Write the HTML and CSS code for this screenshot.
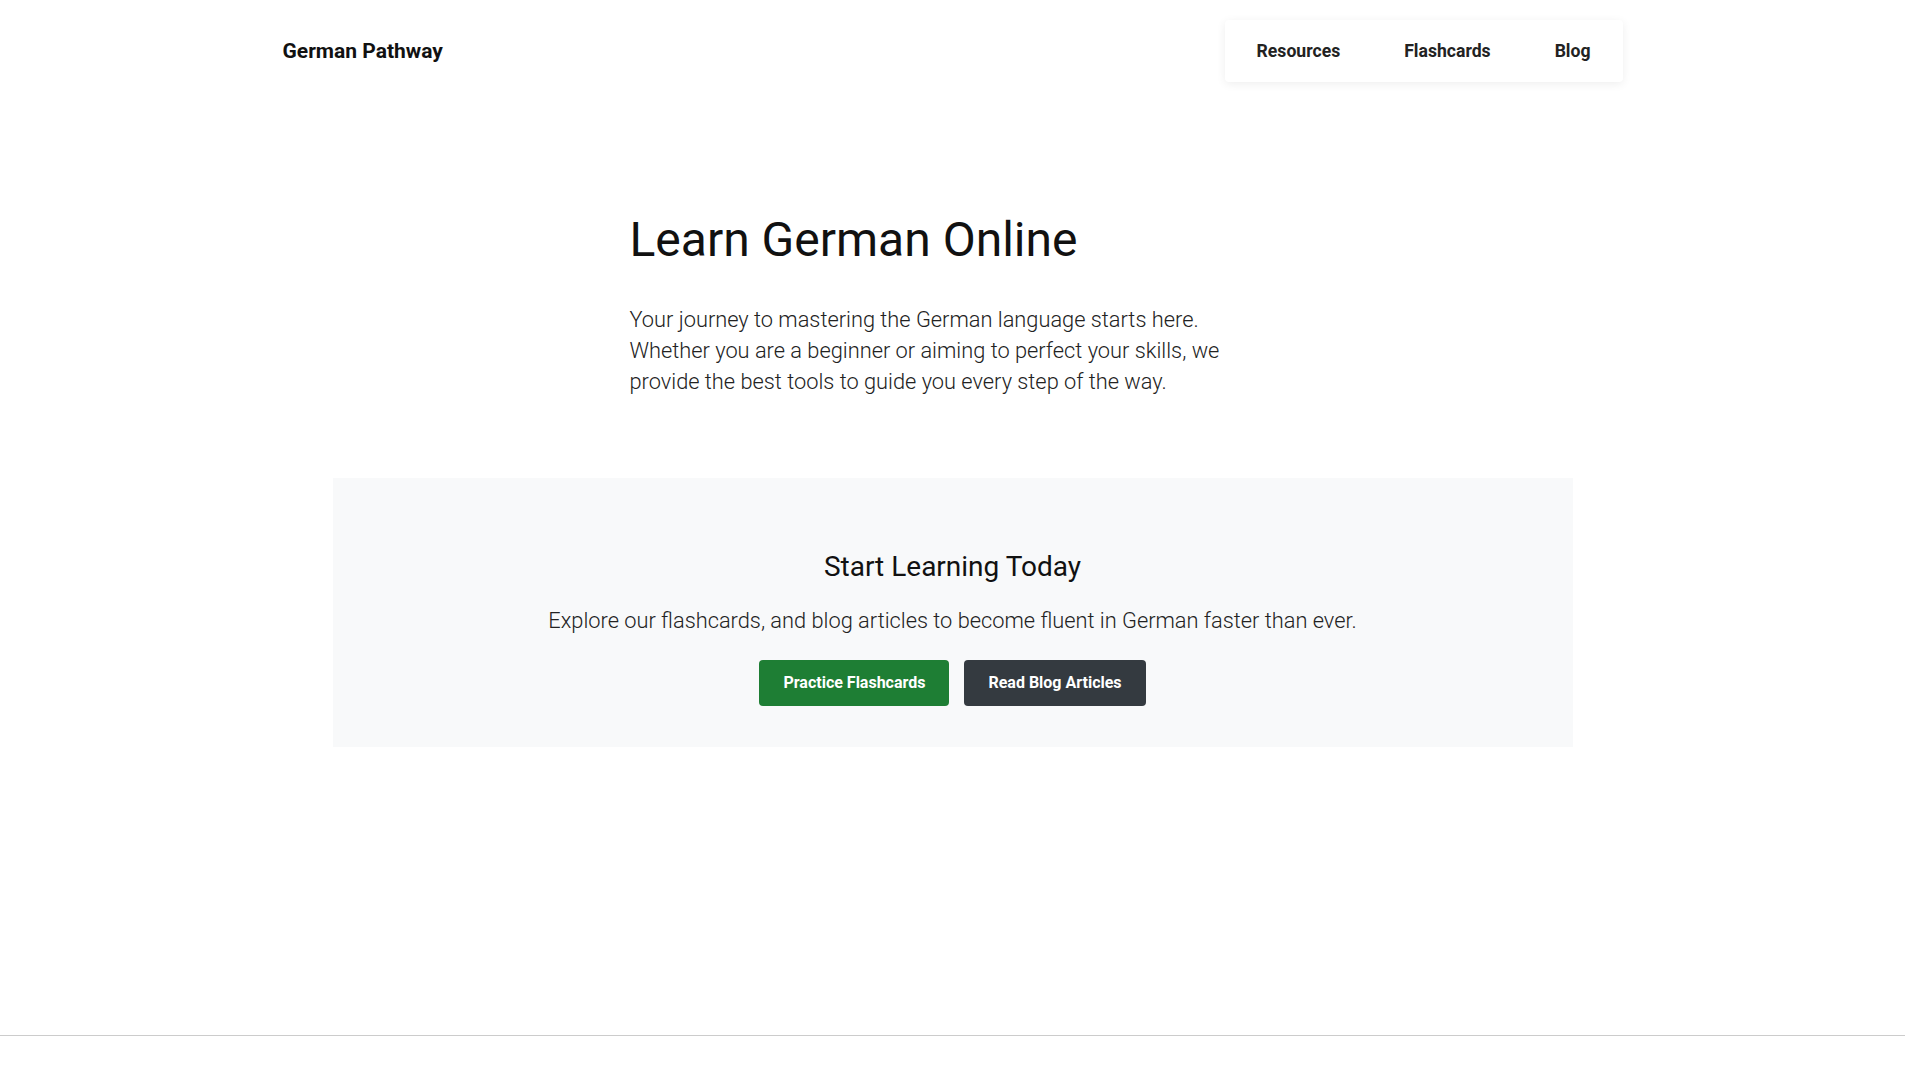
FILE: index.html
```html
<!DOCTYPE html>
<html lang="en">
<head>
  <meta charset="UTF-8" />
  <title>German Pathway</title>
  <link rel="stylesheet" href="styles.css">
</head>
<body>
  <header class="site-header">
    <div class="header-inner">
      <a href="index.html" class="logo">German Pathway</a>
      <nav class="nav-links">
        <a href="resources.html">Resources</a>
        <a href="flashcards.html">Flashcards</a>
        <a href="blog.html">Blog</a>
      </nav>
    </div>
  </header>

  <main>
    <section class="hero">
      <h1>Learn German Online</h1>
      <p>Your journey to mastering the German language starts here. Whether you are a beginner or aiming to perfect your skills, we provide the best tools to guide you every step of the way.</p>
    </section>

    <section class="cta">
      <h2>Start Learning Today</h2>
      <p>Explore our flashcards, and blog articles to become fluent in German faster than ever.</p>
      <div class="cta-buttons">
        <a href="flashcards.html" class="btn btn-green">Practice Flashcards</a>
        <a href="blog.html" class="btn btn-dark">Read Blog Articles</a>
      </div>
    </section>
  </main>

  <footer class="site-footer"></footer>
</body>
</html>
```

FILE: styles.css
```css
html {
  overflow-y: scroll;
}

html, body {
  margin: 0;
  padding: 0;
  font-family: Roboto, "Liberation Sans", sans-serif;
  background-color: #fff;
  color: #111;
}

body {
  padding-right: 15px;
}

a {
  text-decoration: none;
  color: inherit;
}

.site-header {
  padding: 20px 0;
}

.header-inner {
  width: 1340px;
  margin: 0 auto;
  display: flex;
  justify-content: space-between;
  align-items: center;
}

.logo {
  font-size: 21px;
  font-weight: 700;
  color: #111;
}

.nav-links {
  display: flex;
  background-color: #fff;
  border-radius: 4px;
  box-shadow: 0 2px 10px rgba(0, 0, 0, 0.07);
}

.nav-links a {
  padding: 20px 32px;
  font-size: 17.6px;
  line-height: 22px;
  font-weight: 700;
  color: #222;
}

.hero {
  width: 646px;
  margin: 0 auto;
  padding: 110px 0 81px;
}

.hero h1 {
  margin: 0 0 37px;
  font-size: 48px;
  line-height: 56px;
  font-weight: 400;
  color: #111;
}

.hero p {
  margin: 0;
  font-size: 21.8px;
  line-height: 30.8px;
  font-weight: 300;
  color: #222;
}

.cta {
  width: 1240px;
  margin: 0 auto;
  padding: 72px 0 41px;
  background-color: #f8f9fa;
  text-align: center;
}

.cta h2 {
  margin: 0 0 23px;
  font-size: 28px;
  font-weight: 400;
  color: #111;
}

.cta p {
  margin: 0 0 23px;
  font-size: 21.8px;
  line-height: 30.8px;
  font-weight: 300;
  color: #222;
}

.cta-buttons {
  display: flex;
  justify-content: center;
  gap: 15px;
}

.btn {
  padding: 12px 24px;
  font-size: 16px;
  line-height: 22px;
  font-weight: 700;
  color: #fff;
  border-radius: 4px;
}

.btn-green {
  background-color: #1e7e34;
}

.btn-dark {
  background-color: #343a40;
}

.site-footer {
  margin-top: 288px;
  border-top: 1px solid #ccc;
  height: 140px;
}
```
